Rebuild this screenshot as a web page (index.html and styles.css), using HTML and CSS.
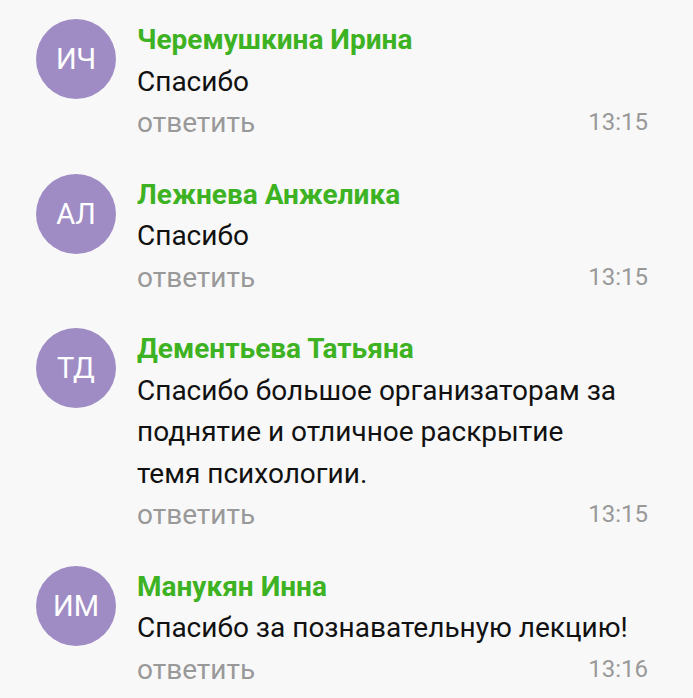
FILE: index.html
```html
<!DOCTYPE html>
<html lang="ru">
<head>
    <meta charset="UTF-8">
    <title>Комментарии</title>
    <link rel="stylesheet" href="styles.css">
</head>
<body>
    <div class="comments">
        <div class="comment">
            <div class="avatar">ИЧ</div>
            <div class="body">
                <div class="name">Черемушкина Ирина</div>
                <div class="text">Спасибо</div>
                <div class="meta"><span class="reply">ответить</span><span class="time">13:15</span></div>
            </div>
        </div>
        <div class="comment">
            <div class="avatar">АЛ</div>
            <div class="body">
                <div class="name">Лежнева Анжелика</div>
                <div class="text">Спасибо</div>
                <div class="meta"><span class="reply">ответить</span><span class="time">13:15</span></div>
            </div>
        </div>
        <div class="comment">
            <div class="avatar">ТД</div>
            <div class="body">
                <div class="name">Дементьева Татьяна</div>
                <div class="text">Спасибо большое организаторам за<br>поднятие и отличное раскрытие<br>темя психологии.</div>
                <div class="meta"><span class="reply">ответить</span><span class="time">13:15</span></div>
            </div>
        </div>
        <div class="comment">
            <div class="avatar">ИМ</div>
            <div class="body">
                <div class="name">Манукян Инна</div>
                <div class="text">Спасибо за познавательную лекцию!</div>
                <div class="meta"><span class="reply">ответить</span><span class="time">13:16</span></div>
            </div>
        </div>
    </div>
</body>
</html>
```

FILE: styles.css
```css
*{
    margin: 0;
    padding: 0;
    box-sizing: border-box;
}

body{
    background: #f8f8f8;
    font-family: Roboto, "Liberation Sans", sans-serif;
}

.comments{
    padding-top: 19px;
}
.comment{
    display: flex;
    padding-left: 36px;
    padding-right: 45px;
    margin-bottom: 30px;
}
.avatar{
    flex: none;
    width: 80px;
    height: 80px;
    border-radius: 50%;
    background: #a08cc4;
    color: #fff;
    font-size: 29px;
    display: flex;
    align-items: center;
    justify-content: center;
    margin-right: 21px;
}
.body{
    flex: 1;
    font-size: 28px;
    line-height: 41.5px;
}
.name{
    color: #3db222;
    font-weight: bold;
}
.text{
    color: #111;
}
.meta{
    display: flex;
    justify-content: space-between;
    color: #999;
}
.time{
    font-size: 24px;
}
```
